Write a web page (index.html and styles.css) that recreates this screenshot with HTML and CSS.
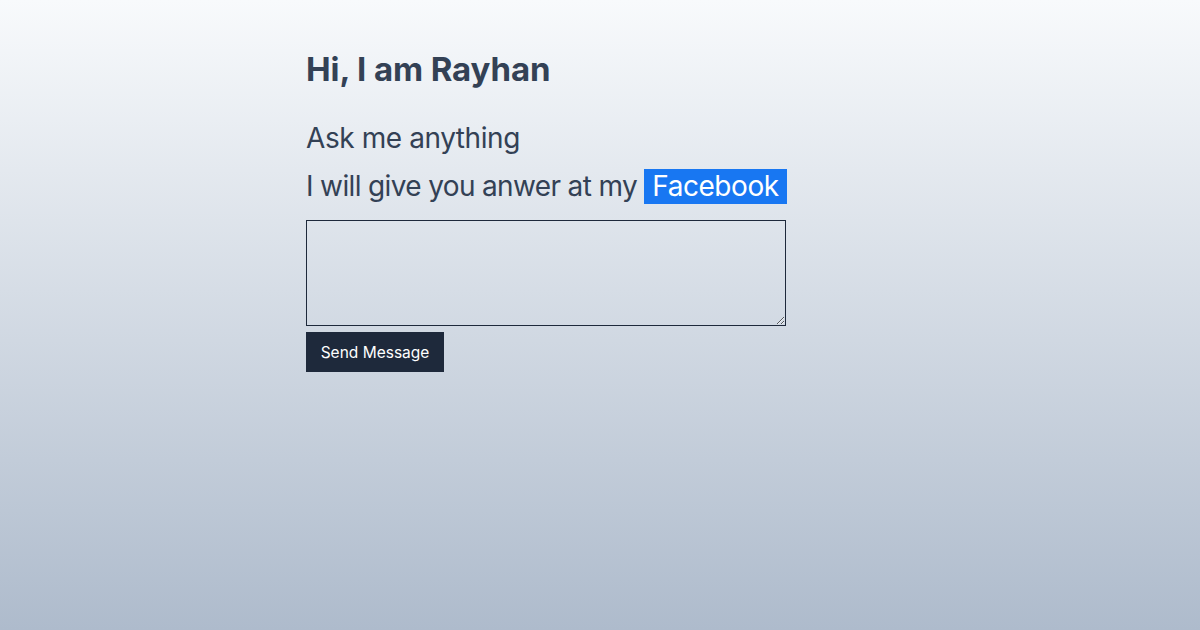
FILE: index.html
```html
<!DOCTYPE html>
<html>
<head>
<meta charset="utf-8">
<link rel="stylesheet" href="styles.css">
</head>
<body>
<main class="page">
  <div class="container">
    <h1 class="title">Hi, I am Rayhan</h1>
    <p class="lead">Ask me anything</p>
    <p class="lead lead-2">I will give you anwer at my <span class="fb">Facebook</span></p>
    <form class="form">
      <textarea class="message"></textarea>
      <button type="button" class="send">Send Message</button>
    </form>
  </div>
</main>
</body>
</html>
```

FILE: styles.css
```css
html, body {
  margin: 0;
  padding: 0;
}
body {
  font-family: Inter, "Noto Sans", sans-serif;
  color: #334155;
}
.page {
  height: 630px;
  background: linear-gradient(to bottom, #f8fafc 0%, #aebbcc 100%);
  box-sizing: border-box;
  padding-top: 46px;
}
.container {
  width: 588px;
  margin: 0 auto;
}
.title {
  margin: 0;
  font-size: 33px;
  font-weight: 700;
  line-height: 46px;
  letter-spacing: -0.1px;
}
.lead {
  margin: 0;
  font-size: 28px;
  line-height: 48px;
  font-weight: 400;
  letter-spacing: -0.42px;
}
.lead-2 {
  letter-spacing: -0.64px;
}
.title + .lead {
  margin-top: 22px;
}
.fb {
  display: inline-block;
  background: #1877f2;
  color: #ffffff;
  padding: 0 8px;
  line-height: 35px;
  letter-spacing: -0.45px;
}
.form {
  margin-top: 10px;
  display: flex;
  flex-direction: column;
  align-items: flex-start;
  gap: 6px;
}
.message {
  width: 480px;
  height: 106px;
  box-sizing: border-box;
  border: 1px solid #1e293b;
  background: transparent;
  margin: 0;
  padding: 4px;
  resize: both;
  display: block;
}
.send {
  width: 138px;
  height: 40px;
  background: #1e293b;
  color: #ffffff;
  border: none;
  font-family: Inter, "Noto Sans", sans-serif;
  font-size: 15.5px;
  padding: 0;
}
```
